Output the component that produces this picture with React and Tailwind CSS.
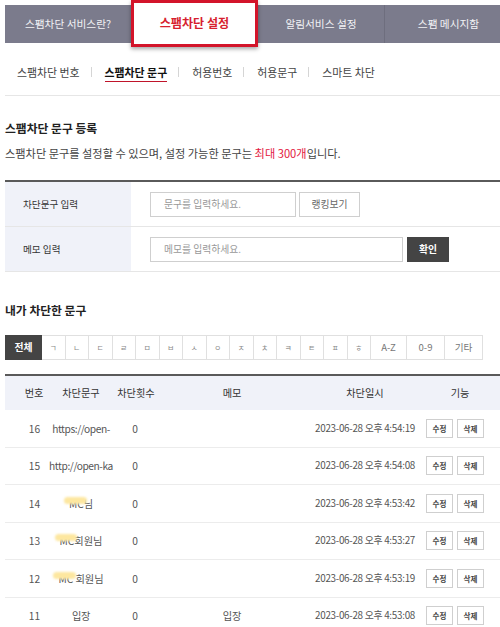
import React from "react";

const FONT = { fontFamily: '"Noto Sans CJK KR", "Noto Sans", sans-serif' };

const tabs = ["스팸차단 서비스란?", "스팸차단 설정", "알림서비스 설정", "스팸 메시지함"];
const subTabs = ["스팸차단 번호", "스팸차단 문구", "허용번호", "허용문구", "스마트 차단"];
const jamo = ["ㄱ", "ㄴ", "ㄷ", "ㄹ", "ㅁ", "ㅂ", "ㅅ", "ㅇ", "ㅈ", "ㅊ", "ㅋ", "ㅌ", "ㅍ", "ㅎ"];

const rows = [
  { no: 16, word: "https://open-", memo: "", date: "2023-06-28 오후 4:54:19" },
  { no: 15, word: "http://open-ka", memo: "", date: "2023-06-28 오후 4:54:08" },
  { no: 14, hidden: "MC", word: "님", memo: "", date: "2023-06-28 오후 4:53:42" },
  { no: 13, hidden: "MC", word: "회원님", memo: "", date: "2023-06-28 오후 4:53:27" },
  { no: 12, hidden: "MC", word: " 회원님", memo: "", date: "2023-06-28 오후 4:53:19" },
  { no: 11, word: "입장", memo: "입장", date: "2023-06-28 오후 4:53:08" },
];

function Word({ row }) {
  if (!row.hidden) return <span className="tracking-[-0.04em]">{row.word}</span>;
  return (
    <span className="whitespace-pre">
      <span className="relative inline-block">
        {row.hidden}
        <span className="absolute -left-[5px] -right-[3px] top-[1px] h-[7px] rounded-full bg-[#fde7a0] blur-[1px]" />
      </span>
      {row.word}
    </span>
  );
}

export default function App() {
  return (
    <div className="w-[500px] h-[627px] overflow-hidden bg-white" style={FONT}>
      <div className="w-[512px] pl-[5px]">
        {/* top tabs */}
        <div className="mt-[5px] h-[38px] bg-[#7b7b8c] flex items-center">
          <div className="w-[126px] h-full flex items-center justify-center text-[10.7px] text-[#f2f2f5]">
            {tabs[0]}
          </div>
          <div className="w-[127px] h-[47px] -mt-[1px] bg-white border-[3px] border-[#d3142a] shadow-[0_2px_4px_rgba(0,0,0,0.35)] flex items-center justify-center text-[12.1px] font-bold text-[#d71f2f]">
            {tabs[1]}
          </div>
          <div className="w-[127px] h-full border-r border-[#6e6e7e] flex items-center justify-center text-[10.7px] text-[#f2f2f5]">
            {tabs[2]}
          </div>
          <div className="w-[127px] h-full flex items-center justify-center text-[10.7px] text-[#f2f2f5]">
            {tabs[3]}
          </div>
        </div>

        {/* sub tabs */}
        <div className="mt-[17px] h-[24px] pl-[12px] flex items-center text-[10.9px] text-[#444]">
          {subTabs.map((t, i) => (
            <React.Fragment key={t}>
              {i > 0 && <span className="ml-[11px] mr-[13px] w-px h-[10px] bg-[#d5d5d5]" />}
              {i === 1 ? (
                <span className="relative h-full flex items-center font-bold text-[#111]">
                  {t}
                  <span className="absolute left-0 right-0 bottom-[2px] h-[1.5px] bg-[#c0142a]" />
                </span>
              ) : (
                <span>{t}</span>
              )}
            </React.Fragment>
          ))}
        </div>
        <div className="mt-[11px] border-t border-[#e6e6e6]" />

        {/* register */}
        <h2 className="mt-[24px] h-[16px] leading-[16px] text-[11.8px] font-bold text-[#222]">스팸차단 문구 등록</h2>
        <p className="mt-[9px] h-[16px] leading-[16px] text-[11.2px] text-[#444]">
          스팸차단 문구를 설정할 수 있으며, 설정 가능한 문구는 <span className="text-[#e3173e]">최대 300개</span>입니다.
        </p>

        <div className="mt-[19px] border-t-2 border-[#5a5a5a]">
          <div className="h-[45px] flex border-b border-[#e6e6e6]">
            <div className="w-[126px] bg-[#f0f2f9] flex items-center pl-[18px] text-[9.6px] text-[#333]">차단문구 입력</div>
            <div className="flex-1 flex items-center pl-[19px]">
              <div className="w-[146px] h-[25px] border border-[#cfcfcf] flex items-center pl-[13px] text-[9.8px] text-[#999]">
                문구를 입력하세요.
              </div>
              <div className="ml-[3px] w-[61px] h-[25px] border border-[#cfcfcf] flex items-center justify-center text-[9.8px] text-[#666]">
                랭킹보기
              </div>
            </div>
          </div>
          <div className="h-[45px] flex border-b border-[#e6e6e6]">
            <div className="w-[126px] bg-[#f0f2f9] flex items-center pl-[18px] text-[9.6px] text-[#333]">메모 입력</div>
            <div className="flex-1 flex items-center pl-[19px]">
              <div className="w-[253px] h-[25px] border border-[#cfcfcf] flex items-center pl-[13px] text-[9.8px] text-[#999]">
                메모를 입력하세요.
              </div>
              <div className="ml-[4px] w-[42px] h-[25px] bg-[#444] flex items-center justify-center text-[9.8px] font-bold text-white">
                확인
              </div>
            </div>
          </div>
        </div>

        {/* list */}
        <h2 className="mt-[30px] h-[16px] leading-[16px] text-[11.8px] font-bold text-[#222]">내가 차단한 문구</h2>

        <div className="mt-[17px] h-[25px] flex">
          <div className="w-[37px] bg-[#444] flex items-center justify-center text-[9.8px] font-bold text-white">전체</div>
          {jamo.map((j) => (
            <div key={j} className="w-[23.5px] border-y border-r border-[#e0e0e0] flex items-center justify-center text-[7.5px] text-[#888]">
              {j}
            </div>
          ))}
          {[["A-Z", 36], ["0-9", 38], ["기타", 38]].map(([t, w]) => (
            <div
              key={t}
              className={`${w === 36 ? "w-[36px]" : "w-[38px]"} border-y border-r border-[#e0e0e0] flex items-center justify-center text-[9.6px] text-[#777]`}
            >
              {t}
            </div>
          ))}
        </div>

        <div className="mt-[14px] border-t-2 border-[#5a5a5a]">
          <div className="h-[34px] bg-[#f0f2f9] flex items-center text-[10.2px] text-[#333]">
            <div className="w-[58px] flex justify-center">번호</div>
            <div className="w-[36px] flex justify-center whitespace-nowrap">차단문구</div>
            <div className="w-[74px] flex justify-center whitespace-nowrap">차단횟수</div>
            <div className="w-[118px] flex justify-center">메모</div>
            <div className="w-[129px] flex justify-center pl-[19px]">차단일시</div>
            <div className="w-[87px] flex justify-center pr-[7px]">기능</div>
          </div>
          {rows.map((r) => (
            <div key={r.no} className="h-[37.5px] border-b border-[#ececec] flex items-center text-[10.2px] text-[#555]">
              <div className="w-[58px] flex justify-center pl-[1px]">{r.no}</div>
              <div className="w-[36px] flex justify-center whitespace-nowrap">
                <Word row={r} />
              </div>
              <div className="w-[74px] flex justify-center pr-[2px]">0</div>
              <div className="w-[118px] flex justify-center">{r.memo}</div>
              <div className="w-[129px] flex justify-end pr-[5px] whitespace-nowrap text-[9.9px] tracking-[-0.03em]">
                {r.date}
              </div>
              <div className="w-[87px] flex items-center pl-[6px] gap-[4px]">
                <span className="w-[27px] h-[19px] border border-[#cfcfcf] flex items-center justify-center text-[7.5px] font-bold text-[#444]">
                  수정
                </span>
                <span className="w-[27px] h-[19px] border border-[#cfcfcf] flex items-center justify-center text-[7.5px] font-bold text-[#444]">
                  삭제
                </span>
              </div>
            </div>
          ))}
        </div>
      </div>
    </div>
  );
}
